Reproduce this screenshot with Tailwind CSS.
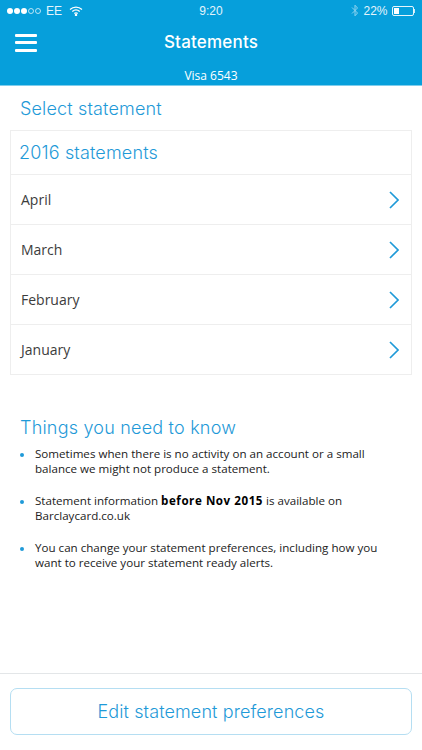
<!DOCTYPE html>
<html>
<head>
<meta charset="utf-8">
<script src="https://cdn.jsdelivr.net/npm/@tailwindcss/browser@4"></script>
</head>
<body class="bg-white">
<div class="w-[422px] h-[750px] flex flex-col overflow-hidden bg-white font-['Open_Sans',sans-serif]">
  <header class="h-[86px] shrink-0 flex flex-col bg-[#069fdb] border-b border-[#7fcdec] text-white">
    <div class="h-[22px] px-[7px] grid grid-cols-3 items-center text-[12px] font-['Liberation_Sans',sans-serif] text-[#e4f4fb]">
      <div class="flex items-center gap-[1px]">
        <span class="size-[6px] rounded-full bg-white"></span>
        <span class="size-[6px] rounded-full bg-white"></span>
        <span class="size-[6px] rounded-full bg-white"></span>
        <span class="size-[6px] rounded-full border border-white/70"></span>
        <span class="size-[6px] rounded-full border border-white/70"></span>
        <span class="ml-[4px]">EE</span>
        <svg class="ml-[6px]" width="14" height="10" viewBox="0 0 14 10" fill="none" stroke="white" stroke-width="1.3"><path d="M1 3.5C4.5 .3 9.5 .3 13 3.5"/><path d="M3.3 5.6C5.5 3.6 8.5 3.6 10.7 5.6"/><path d="M5.3 7.6C6.3 6.7 7.7 6.7 8.7 7.6"/><circle cx="7" cy="9" r=".6" fill="white"/></svg>
      </div>
      <div class="text-center">9:20</div>
      <div class="flex items-center justify-end">
        <svg width="8" height="13" viewBox="0 0 8 13" fill="none" stroke="#8fd3ef" stroke-width="1"><path d="M1 3.5L6.5 9L4 11.8V1.2L6.5 4L1 9.5"/></svg>
        <span class="ml-[4px]">22%</span>
        <span class="ml-[4px] w-[22px] h-[10px] rounded-[2px] border border-white/90 p-[1px] flex"><span class="w-[5px] bg-white"></span></span>
        <span class="w-[1.5px] h-[4px] bg-white/80"></span>
      </div>
    </div>
    <div class="h-[40px] px-[15px] pt-[3px] relative flex items-center justify-center">
      <div class="absolute left-[15px] top-[12px] w-[22px] flex flex-col gap-[4.5px]">
        <span class="h-[3px] rounded-[1px] bg-white"></span>
        <span class="h-[3px] rounded-[1px] bg-white"></span>
        <span class="h-[3px] rounded-[1px] bg-white"></span>
      </div>
      <span class="font-['Inter',sans-serif] font-medium text-[17px] tracking-[0.2px]">Statements</span>
    </div>
    <div class="flex-1 flex items-center justify-center text-[12px] pt-[6px]">Visa 6543</div>
  </header>

  <h2 class="h-[44px] pl-[20px] flex items-center font-['Inter',sans-serif] font-light text-[18px] tracking-[0.15px] text-[#1f9ad8]">Select statement</h2>

  <section class="mx-[10px] border border-[#eeeeee]">
    <h3 class="h-[44px] pl-[8px] flex items-center border-b border-[#eeeeee] font-['Inter',sans-serif] font-light text-[18px] tracking-[0.15px] text-[#1f9ad8]">2016 statements</h3>
    <div class="h-[50px] pl-[10px] pr-[12px] flex items-center justify-between border-b border-[#eeeeee] text-[14px] text-[#3c3c3c]">April<svg width="10" height="18" viewBox="0 0 10 18" fill="none" stroke="#1f9ad8" stroke-width="1.7"><path d="M1 1L9 9L1 17"/></svg></div>
    <div class="h-[50px] pl-[10px] pr-[12px] flex items-center justify-between border-b border-[#eeeeee] text-[14px] text-[#3c3c3c]">March<svg width="10" height="18" viewBox="0 0 10 18" fill="none" stroke="#1f9ad8" stroke-width="1.7"><path d="M1 1L9 9L1 17"/></svg></div>
    <div class="h-[50px] pl-[10px] pr-[12px] flex items-center justify-between border-b border-[#eeeeee] text-[14px] text-[#3c3c3c]">February<svg width="10" height="18" viewBox="0 0 10 18" fill="none" stroke="#1f9ad8" stroke-width="1.7"><path d="M1 1L9 9L1 17"/></svg></div>
    <div class="h-[49px] pl-[10px] pr-[12px] flex items-center justify-between text-[14px] text-[#3c3c3c]">January<svg width="10" height="18" viewBox="0 0 10 18" fill="none" stroke="#1f9ad8" stroke-width="1.7"><path d="M1 1L9 9L1 17"/></svg></div>
  </section>

  <section class="mt-[38px] px-[20px]">
    <h2 class="font-['Inter',sans-serif] font-light text-[18px] leading-[30px] tracking-[0.2px] text-[#1f9ad8]">Things you need to know</h2>
    <ul class="mt-[4px] flex flex-col gap-[18px] text-[11.6px] leading-[14.5px] text-[#222222]">
      <li class="relative pl-[15px]"><span class="absolute left-0 top-[6px] size-[4px] rounded-full bg-[#1f9ad8]"></span>Sometimes when there is no activity on an account or a small balance we might not produce a statement.</li>
      <li class="relative pl-[15px]"><span class="absolute left-0 top-[6px] size-[4px] rounded-full bg-[#1f9ad8]"></span>Statement information <b class="text-black tracking-[0.55px]">before Nov 2015</b> is available on Barclaycard.co.uk</li>
      <li class="relative pl-[15px]"><span class="absolute left-0 top-[6px] size-[4px] rounded-full bg-[#1f9ad8]"></span>You can change your statement preferences, including how you want to receive your statement ready alerts.</li>
    </ul>
  </section>

  <footer class="mt-auto h-[77px] shrink-0 border-t border-[#e3e6e8] px-[10px] pt-[14px]">
    <button class="w-full h-[47px] rounded-[7px] border border-[#b5def2] font-['Inter',sans-serif] font-light text-[18px] tracking-[0.1px] text-[#1f9ad8]">Edit statement preferences</button>
  </footer>
</div>
</body>
</html>
